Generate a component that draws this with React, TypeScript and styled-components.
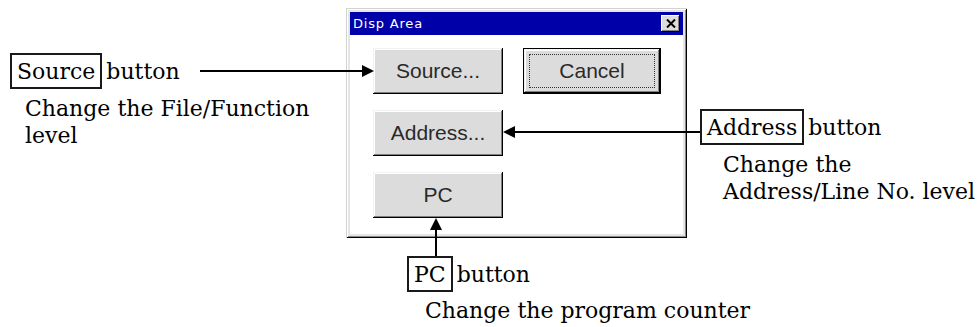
import React from "react";
import styled, { createGlobalStyle } from "styled-components";

const GlobalStyle = createGlobalStyle`
  html, body {
    margin: 0;
    padding: 0;
    background: #ffffff;
  }
  body {
    font-family: "DejaVu Serif", "Liberation Serif", serif;
    color: #000000;
  }
`;

const Figure = styled.div`
  position: relative;
  width: 980px;
  height: 327px;
  padding-top: 8px;
  box-sizing: border-box;
  display: grid;
  grid-template-columns: 346px 341px 1fr;
  grid-template-rows: auto 1fr;
  overflow: hidden;
`;

const Callout = styled.div<{ $col: string; $row: number; $top: number; $left: number }>`
  grid-column: ${({ $col }) => $col};
  grid-row: ${({ $row }) => $row};
  align-self: start;
  padding: ${({ $top }) => $top}px 0 0 ${({ $left }) => $left}px;
  font-size: 22px;
  line-height: 27px;
  white-space: nowrap;
`;

const LabelRow = styled.div`
  display: flex;
  align-items: center;
`;

const LabelBox = styled.span`
  display: inline-flex;
  align-items: center;
  height: 36px;
  box-sizing: border-box;
  padding: 0 5px;
  border: 2px solid #1a1a1a;
`;

const LabelRest = styled.span`
  margin-left: 4px;
`;

const Desc = styled.div<{ $indent: number; $gap: number }>`
  margin: ${({ $gap }) => $gap}px 0 0 ${({ $indent }) => $indent}px;
`;

const Dialog = styled.div`
  grid-column: 2;
  grid-row: 1;
  height: 230px;
  box-sizing: border-box;
  padding: 4px;
  background: #e6e6e6;
  box-shadow: inset 1px 1px 0 #d2d2d2, inset -1px -1px 0 #000000,
    inset 2px 2px 0 #ffffff, inset -2px -2px 0 #8a8a8a;
  display: flex;
  flex-direction: column;
`;

const TitleBar = styled.div`
  height: 23px;
  flex: none;
  display: flex;
  align-items: center;
  justify-content: space-between;
  padding: 0 3px;
  background: #0000a8;
  color: #ffffff;
  font-family: "DejaVu Sans", "Liberation Sans", sans-serif;
  font-size: 13px;
  letter-spacing: 0.8px;
`;

const CloseButton = styled.span`
  width: 19px;
  height: 17px;
  display: flex;
  align-items: center;
  justify-content: center;
  background: #dcdcdc;
  box-shadow: inset -1px -1px 0 #000000, inset 1px 1px 0 #ffffff,
    inset -2px -2px 0 #808080;
`;

const Body = styled.div`
  flex: 1;
  display: grid;
  grid-template-columns: 130px 138px;
  grid-auto-rows: 46px;
  column-gap: 20px;
  row-gap: 16px;
  padding: 13px 22px 16px 23px;
  background: #ffffff;
`;

const Button = styled.button<{ $default?: boolean }>`
  position: relative;
  padding: 0;
  margin: 0;
  border: ${({ $default }) => ($default ? "1px solid #000000" : "none")};
  background: #dcdcdc;
  color: #2a2a2a;
  font-family: "Liberation Sans", Arial, sans-serif;
  font-size: 21px;
  box-shadow: inset -1px -1px 0 #000000, inset 1px 1px 0 #f2f2f2,
    inset -2px -2px 0 #808080, inset 2px 2px 0 #ffffff;
  &::after {
    content: "";
    display: ${({ $default }) => ($default ? "block" : "none")};
    position: absolute;
    inset: 5px;
    border: 1px dotted #333333;
  }
`;

const Connectors = styled.svg`
  position: absolute;
  left: 0;
  top: 0;
  pointer-events: none;
`;

export default function App() {
  return (
    <>
      <GlobalStyle />
      <Figure>
        <Callout $col="1" $row={1} $top={45} $left={10}>
          <LabelRow>
            <LabelBox>Source</LabelBox>
            <LabelRest>button</LabelRest>
          </LabelRow>
          <Desc $indent={15} $gap={6}>
            Change the File/Function
            <br />
            level
          </Desc>
        </Callout>

        <Dialog>
          <TitleBar>
            <span>Disp Area</span>
            <CloseButton>
              <svg width="10" height="9" viewBox="0 0 10 9">
                <path d="M1 0.5 L9 8.5 M9 0.5 L1 8.5" stroke="#000" strokeWidth="2" />
              </svg>
            </CloseButton>
          </TitleBar>
          <Body>
            <Button>Source...</Button>
            <Button $default>Cancel</Button>
            <Button>Address...</Button>
            <span />
            <Button>PC</Button>
          </Body>
        </Dialog>

        <Callout $col="3" $row={1} $top={101} $left={13}>
          <LabelRow>
            <LabelBox>Address</LabelBox>
            <LabelRest>button</LabelRest>
          </LabelRow>
          <Desc $indent={23} $gap={6}>
            Change the
            <br />
            Address/Line No. level
          </Desc>
        </Callout>

        <Callout $col="2 / 4" $row={2} $top={18} $left={61}>
          <LabelRow>
            <LabelBox>PC</LabelBox>
            <LabelRest>button</LabelRest>
          </LabelRow>
          <Desc $indent={18} $gap={5}>
            Change the program counter
          </Desc>
        </Callout>

        <Connectors width="980" height="327" viewBox="0 0 980 327">
          <line x1="200" y1="71" x2="364" y2="71" stroke="#000" strokeWidth="2" />
          <polygon points="362,65 374,71 362,77" fill="#000" />
          <line x1="700" y1="132" x2="513" y2="132" stroke="#000" strokeWidth="2" />
          <polygon points="515,126 503,132 515,138" fill="#000" />
          <line x1="436" y1="256" x2="436" y2="228" stroke="#000" strokeWidth="2" />
          <polygon points="430,230 436,218 442,230" fill="#000" />
        </Connectors>
      </Figure>
    </>
  );
}
